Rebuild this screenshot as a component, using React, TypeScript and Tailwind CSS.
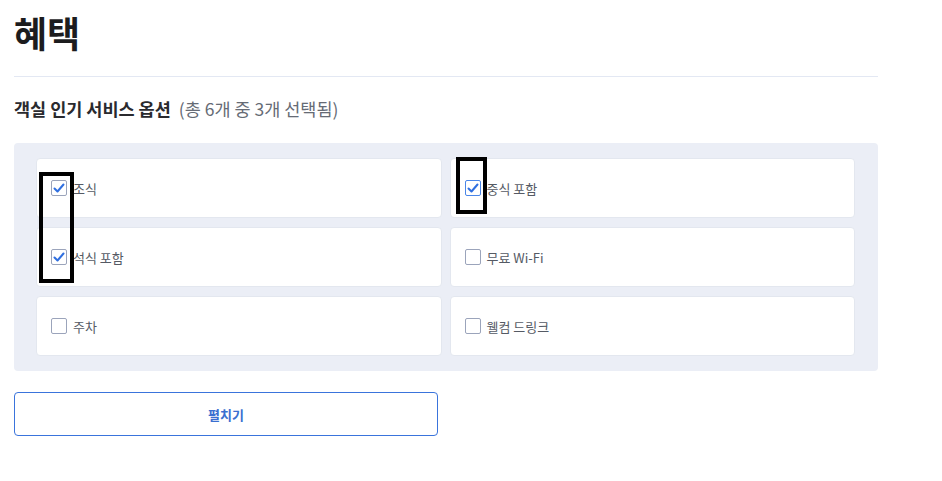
interface Option {
  id: string;
  label: string;
  checked: boolean;
  focused?: boolean;
}

const options: Option[] = [
  { id: "breakfast", label: "조식", checked: true },
  { id: "lunch", label: "중식 포함", checked: true, focused: true },
  { id: "dinner", label: "석식 포함", checked: true },
  { id: "wifi", label: "무료 Wi-Fi", checked: false },
  { id: "parking", label: "주차", checked: false },
  { id: "drink", label: "웰컴 드링크", checked: false },
];

function OptionCard({ option }: { option: Option }) {
  return (
    <label className="flex h-[60px] items-center gap-[6px] rounded-[4px] border border-[#e3e7ef] bg-white pl-[14px]">
      <span
        className={
          option.focused
            ? "flex h-4 w-4 items-center justify-center rounded-[2px] border border-[#4a86e8] bg-white"
            : "flex h-4 w-4 items-center justify-center rounded-[2px] border border-[#9ba4bb] bg-white"
        }
      >
        {option.checked && (
          <svg viewBox="0 0 14 14" className="h-[14px] w-[14px]" fill="none">
            <path
              d="M2.5 7.5 L5.5 10.5 L11.5 3.5"
              stroke="#2f6fe0"
              strokeWidth="2"
              strokeLinecap="round"
              strokeLinejoin="round"
            />
          </svg>
        )}
      </span>
      <span className="text-[13px] text-[#555a64]">{option.label}</span>
    </label>
  );
}

export default function App() {
  const selected = options.filter((o) => o.checked).length;

  return (
    <div
      className="relative min-h-[481px] w-[942px] bg-white px-[14px] pt-[6px]"
      style={{ fontFamily: '"Noto Sans CJK KR", "Noto Sans", sans-serif' }}
    >
      <h1 className="text-[36px] font-bold leading-[52px] text-[#1c1c1e]">
        혜택
      </h1>
      <div className="mt-[18px] w-[864px] border-t border-[#e3e8f3]" />

      <div className="mt-[19px] flex items-baseline gap-2">
        <h2 className="text-[17.5px] font-bold text-[#2a2a2e]">
          객실 인기 서비스 옵션
        </h2>
        <span className="text-[17.5px] text-[#666b75]">
          (총 {options.length}개 중 {selected}개 선택됨)
        </span>
      </div>

      <div className="mt-[21px] grid w-[864px] grid-cols-2 gap-x-2 gap-y-[9px] rounded-[4px] bg-[#ebeef6] pb-[15px] pl-[22px] pr-[23px] pt-[15px]">
        {options.map((o) => (
          <OptionCard key={o.id} option={o} />
        ))}
      </div>

      <button className="mt-[21px] h-[44px] w-[424px] rounded-[4px] border border-[#3a74dc] bg-white text-[13px] font-bold text-[#3a6fd0]">
        펼치기
      </button>

      {/* annotation boxes */}
      <div className="absolute left-[39px] top-[172px] h-[111px] w-[35px] border-4 border-black" />
      <div className="absolute left-[456px] top-[157px] h-[57px] w-[31px] border-4 border-black" />
    </div>
  );
}
